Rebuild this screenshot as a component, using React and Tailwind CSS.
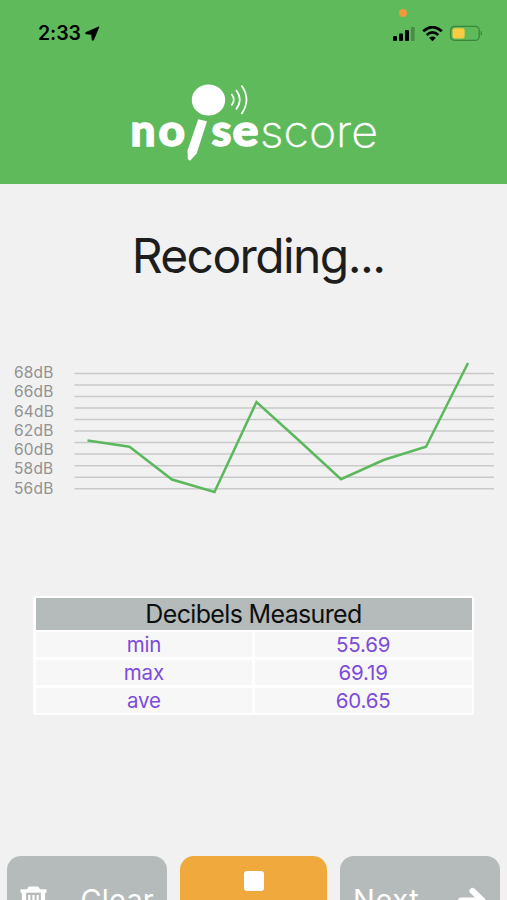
import React from 'react';

const LABELS = ['68dB', '66dB', '64dB', '62dB', '60dB', '58dB', '56dB'];

const GRID_LINES = Array.from({ length: 11 }, (_, i) => 13.4 + i * 11.53);

const POINTS = '13.5,80.5 55.5,86.8 98,119.5 140.5,132 182.5,42 225,80.5 267,119.2 309.5,100 352,86.7 394,3';

const ROWS = [
  { label: 'min', value: '55.69' },
  { label: 'max', value: '69.19' },
  { label: 'ave', value: '60.65' },
];

const StatusBar = () => (
  <div className="flex h-[66px] justify-between pl-[38px] pr-[24px] pt-[25px]">
    <div className="flex h-[17px] items-center gap-[4px]">
      <span className="text-[19.5px] font-semibold leading-[17px] tracking-[-0.1px] text-black">2:33</span>
      <svg width="15" height="15" viewBox="0 0 15 15">
        <path d="M14 0.8 L0.8 6.6 Q0.2 7.4 1 7.9 L6.6 8.3 L7.2 14 Q7.8 14.8 8.5 14 Z" stroke="#000" strokeWidth="0.8" strokeLinejoin="round" />
      </svg>
    </div>
    <div className="relative flex h-[17px] items-center">
      {/* Microphone in use */}
      <span className="absolute left-[7px] top-[-16px] h-[8px] w-[8px] rounded-full bg-[#ee9a3a]" />
      <svg width="23" height="16" viewBox="0 0 23 16">
        <rect x="1" y="10" width="4" height="5" rx="1" />
        <rect x="7" y="7.5" width="4" height="7.5" rx="1" />
        <rect x="13" y="4" width="4" height="11" rx="1" />
        <rect x="19" y="1" width="3.6" height="14" rx="1" fillOpacity="0.25" />
      </svg>
      <svg className="ml-[7px]" width="21" height="16" viewBox="0 0 21 16" fill="none" stroke="#000">
        <path d="M1.2 5.3 Q10.5 -3 19.8 5.3" strokeWidth="2.8" />
        <path d="M4.7 9 Q10.5 3.9 16.3 9" strokeWidth="2.7" />
        <path d="M10.5 15.2 L7.1 11.8 Q10.5 9 13.9 11.8 Z" fill="#000" stroke="none" />
      </svg>
      <svg className="ml-[6px]" width="34" height="17" viewBox="0 0 34 17">
        <rect x="1.6" y="1.4" width="28.6" height="14" rx="4" fill="none" stroke="#3c8737" strokeWidth="1.3" />
        <rect x="3.6" y="3.2" width="12" height="10.4" rx="2" fill="#fbcb3f" />
        <path d="M31.6 5.6 Q34.4 8.3 31.6 11 Z" fill="#3c8737" />
      </svg>
    </div>
  </div>
);

const Logo = () => (
  <svg width="254" height="88" viewBox="0 0 254 88" fill="#fff">
    <ellipse cx="81.5" cy="20" rx="16.7" ry="15.5" />
    <g fill="none" stroke="#fff" strokeWidth="1.7">
      <path d="M104.5 14 Q109 19.5 104.5 25.5" />
      <path d="M109 10 Q116.5 19.5 109 29.5" />
      <path d="M114.5 5.5 Q124.5 19.5 114.5 34" />
    </g>
    <path d="M71.2 39.3 L80 41.2 L69.7 73.5 L63 80.8 L60.8 79 L60.5 70.5 Z" />
    <g fontFamily="Lato, sans-serif" fontWeight="900" fontSize="44" stroke="#fff" strokeWidth="1.4">
      <text x="3.5" y="66" textLength="25" lengthAdjust="spacingAndGlyphs">n</text>
      <text x="31.5" y="66" textLength="26.5" lengthAdjust="spacingAndGlyphs">o</text>
      <text x="84.5" y="66" textLength="20" lengthAdjust="spacingAndGlyphs">s</text>
      <text x="105.5" y="66" textLength="26" lengthAdjust="spacingAndGlyphs">e</text>
    </g>
    <text x="133" y="66.5" fontFamily="Inter, sans-serif" fontWeight="200" fontSize="43" textLength="118" lengthAdjust="spacingAndGlyphs" stroke="#fff" strokeWidth="0.4">score</text>
  </svg>
);

const Chart = () => (
  <div className="flex h-[150px]">
    <div className="flex w-[74px] flex-col pl-[14px] pt-[3px]">
      {LABELS.map((label) => (
        <span key={label} className="h-[19.25px] text-[15.5px] leading-[19.25px] tracking-[0.2px] text-[#929292]">
          {label}
        </span>
      ))}
    </div>
    <svg width="421" height="150" viewBox="0 0 421 150" fill="none">
      {GRID_LINES.map((y) => (
        <line key={y} x1="0.5" x2="420" y1={y} y2={y} stroke="#c9c9c9" strokeWidth="1.5" />
      ))}
      <polyline points={POINTS} stroke="#5cb85c" strokeWidth="2.5" />
    </svg>
  </div>
);

const DecibelTable = () => (
  <div className="mx-auto grid w-[441px] grid-cols-2 gap-[2.5px] rounded-[3px] bg-white p-[2.5px] text-center">
    <div className="col-span-2 h-[31.5px] bg-[#b5bbba] text-[25px] leading-[32px] tracking-[-0.65px] text-[#0d0f0f]">
      Decibels Measured
    </div>
    {ROWS.map((row) => (
      <React.Fragment key={row.label}>
        <div className="h-[25.3px] bg-[#f7f7f7] text-[20.5px] leading-[25px] tracking-[-0.2px] text-[#7d4bdb]">{row.label}</div>
        <div className="h-[25.3px] bg-[#f7f7f7] text-[20.5px] leading-[25px] tracking-[-0.2px] text-[#7d4bdb]">{row.value}</div>
      </React.Fragment>
    ))}
  </div>
);

const App = () => {
  return (
    <div className="flex h-[900px] w-[507px] flex-col overflow-hidden bg-[#f1f1f1] font-['Inter',sans-serif]">
      <header className="h-[184px] shrink-0 bg-[#5fba5b]">
        <StatusBar />
        <div className="flex justify-center pt-[14px]">
          <Logo />
        </div>
      </header>

      <h1 className="mt-[43px] shrink-0 pl-[9px] text-center text-[48px] leading-[58px] tracking-[-1.6px] text-[#1d1d1d]">
        Recording...
      </h1>

      <div className="mt-[75px] shrink-0">
        <Chart />
      </div>

      <div className="mt-[85.5px] shrink-0">
        <DecibelTable />
      </div>

      {/* Bottom actions, cut off by the viewport */}
      <div className="mt-auto flex h-[44px] shrink-0 gap-[13px] pl-[7px]">
        <button className="flex h-[80px] w-[160px] shrink-0 justify-between rounded-[14px] bg-[#b5bbba] pl-[13px] pr-[13px] pt-[30px] text-white">
          <svg width="27" height="30" viewBox="0 0 27 30" fill="none" stroke="#fff">
            <path d="M0.5 5 H26.5" strokeWidth="3.4" />
            <path d="M8 5 L9.5 1.9 H17.5 L19 5" strokeWidth="3" strokeLinejoin="round" />
            <path d="M4 6 V28 H23 V6" strokeWidth="4.2" />
            <path d="M9.3 9 V24 M13.5 9 V24 M17.7 9 V24" strokeWidth="2.2" />
          </svg>
          <span className="text-[29px] leading-[28px] tracking-[0.2px]">Clear</span>
        </button>
        <button className="flex h-[80px] w-[147px] shrink-0 justify-center rounded-[14px] bg-[#f0a93c] pt-[15px]">
          <span className="h-[20px] w-[20px] rounded-[3px] bg-white" />
        </button>
        <button className="flex h-[80px] w-[160px] shrink-0 justify-between rounded-[14px] bg-[#b5bbba] pl-[13px] pr-[13px] pt-[30px] text-white">
          <span className="text-[29px] leading-[28px] tracking-[0.6px]">Next</span>
          <svg width="30" height="32" viewBox="0 0 30 32" fill="none" stroke="#fff" strokeWidth="6" strokeLinecap="round" strokeLinejoin="round">
            <path d="M4 14.5 H25" />
            <path d="M15.5 5 L25.5 14.5 L15.5 24" />
          </svg>
        </button>
      </div>
    </div>
  );
};

export default App;
